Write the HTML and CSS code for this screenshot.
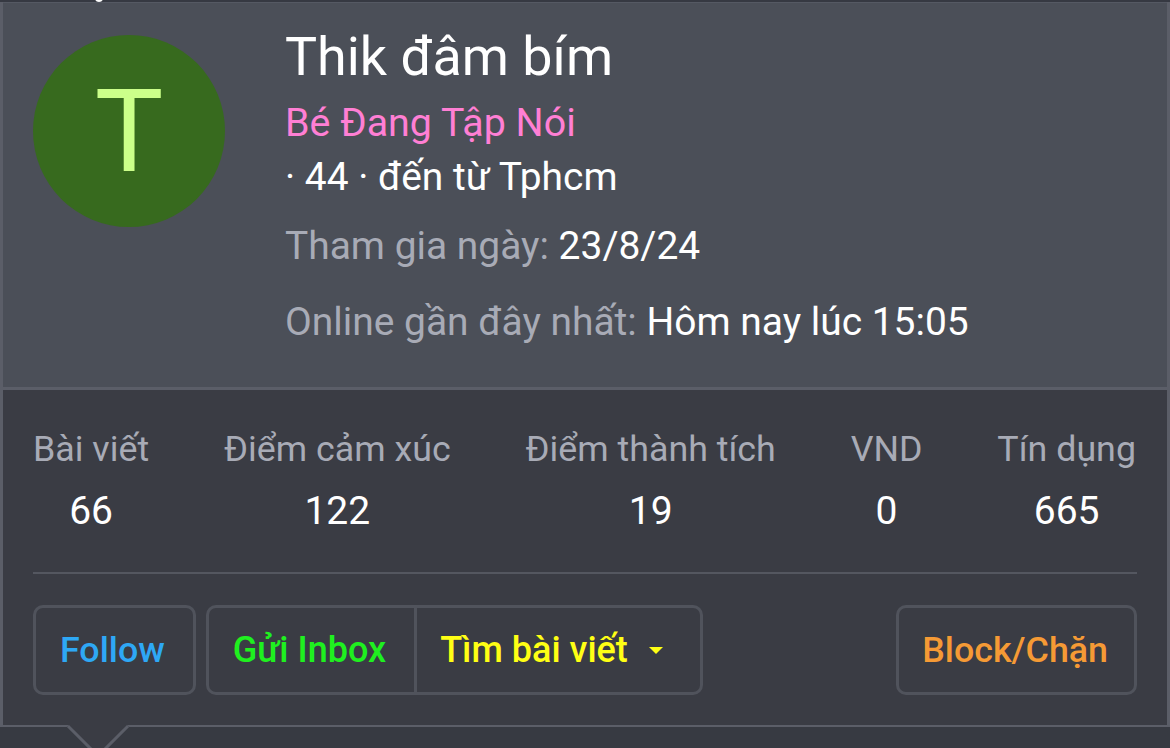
FILE: index.html
```html
<!DOCTYPE html>
<html lang="vi">
<head>
<meta charset="utf-8">
<title>Thik đâm bím</title>
<link rel="stylesheet" href="styles.css">
</head>
<body>
<div class="topstrip"><span class="clip"></span></div>
<div class="card">
  <section class="head">
    <div class="avatar"><span>T</span></div>
    <div class="info">
      <h1 class="name">Thik đâm bím</h1>
      <div class="rank">Bé Đang Tập Nói</div>
      <div class="meta">· 44 · đến từ Tphcm</div>
      <div class="line line-join"><span class="muted">Tham gia ngày:</span> 23/8/24</div>
      <div class="line line-online"><span class="muted">Online gần đây nhất:</span> Hôm nay lúc 15:05</div>
    </div>
  </section>
  <section class="body">
    <div class="stats">
      <div class="stat"><div class="label">Bài viết</div><div class="value">66</div></div>
      <div class="stat"><div class="label">Điểm cảm xúc</div><div class="value">122</div></div>
      <div class="stat"><div class="label">Điểm thành tích</div><div class="value">19</div></div>
      <div class="stat"><div class="label">VND</div><div class="value">0</div></div>
      <div class="stat"><div class="label">Tín dụng</div><div class="value">665</div></div>
    </div>
    <div class="actions">
      <a class="btn btn-follow c-blue">Follow</a>
      <div class="group">
        <a class="btn btn-inbox c-green">Gửi Inbox</a>
        <a class="btn btn-find c-yellow">Tìm bài viết<i class="caret"></i></a>
      </div>
      <a class="btn btn-block c-orange">Block/Chặn</a>
    </div>
  </section>
  <div class="arrow"></div>
</div>
</body>
</html>
```
FILE: styles.css
```css
* { box-sizing: border-box; }
html, body { margin: 0; padding: 0; }
body {
  width: 1170px;
  height: 748px;
  overflow: hidden;
  background: #373a42;
  font-family: Roboto, "Liberation Sans", sans-serif;
  color: #fff;
}
.topstrip {
  height: 2px;
  background: #363942;
  overflow: hidden;
  position: relative;
}
.clip {
  position: absolute;
  left: 95px;
  top: -2px;
  width: 8px;
  height: 4px;
  background: #fff;
  border-radius: 0 0 4px 4px;
}
.card {
  position: relative;
  height: 725px;
  border: 3px solid #5b5e68;
  border-top: 0;
  border-bottom: 0;
}
.head {
  height: 385px;
  background: #4b4f58;
  border-top: 1px solid #555963;
  display: flex;
  padding: 32px 0 0 30px;
  gap: 61px;
}
.avatar {
  width: 192px;
  height: 192px;
  flex: none;
  border-radius: 50%;
  background: #376a1e;
  color: #ccff8a;
  font-size: 115px;
  display: flex;
  align-items: center;
  justify-content: center;
}
.info { min-width: 0; margin-left: -1px; }
.name {
  margin: 0;
  font-weight: 400;
  font-size: 53.8px;
  line-height: 44px;
}
.rank {
  margin-top: 22px;
  font-size: 39.4px;
  line-height: 44px;
  color: #ff7fd4;
}
.meta {
  font-size: 38.9px;
  line-height: 44px;
  margin-top: 10px;
}
.line {
  font-size: 38.95px;
  line-height: 44px;
}
.line-join { margin-top: 25px; }
.line-online { margin-top: 32px; }
.muted { color: #a8abb6; }
.body {
  height: 340px;
  background: #3a3c44;
  border-top: 3px solid #5b5e68;
  border-bottom: 2px solid #5b5e68;
  padding: 37px 30px 0;
}
.stats {
  display: flex;
  justify-content: space-between;
  padding: 0 1px 39px 0;
  border-bottom: 2px solid #545760;
}
.stat { text-align: center; }
.label {
  font-size: 35.8px;
  line-height: 44px;
  color: #a8abb6;
}
.value {
  font-size: 39px;
  line-height: 44px;
  margin-top: 18px;
}
.actions {
  display: flex;
  gap: 10px;
  margin-top: 31px;
}
.group { display: flex; }
.btn {
  height: 90px;
  display: flex;
  align-items: center;
  font-size: 35.8px;
  font-weight: 500;
  border: 3px solid #50535c;
  border-radius: 10px;
}
.btn-follow { padding: 0 28px 0 24px; }
.btn-inbox {
  font-size: 36px;
  padding: 0 28px 0 24px;
  border-radius: 10px 0 0 10px;
}
.btn-find {
  font-size: 36px;
  padding: 0 37px 0 23px;
  border-radius: 0 10px 10px 0;
  border-left: 0;
}
.btn-block {
  margin-left: auto;
  padding: 0 26px 0 23px;
}
.c-blue { color: #2ea8f5; }
.c-green { color: #1ff01f; }
.c-yellow { color: #ffff14; }
.c-orange { color: #f59a35; }
.caret {
  display: block;
  margin-left: 21px;
  width: 0;
  height: 0;
  border-left: 7px solid transparent;
  border-right: 7px solid transparent;
  border-top: 7px solid currentColor;
}
.arrow {
  position: absolute;
  left: 73px;
  top: 703px;
  width: 44px;
  height: 44px;
  background: #3a3c44;
  border-right: 3px solid #5b5e68;
  border-bottom: 3px solid #5b5e68;
  transform: rotate(45deg);
}
```
